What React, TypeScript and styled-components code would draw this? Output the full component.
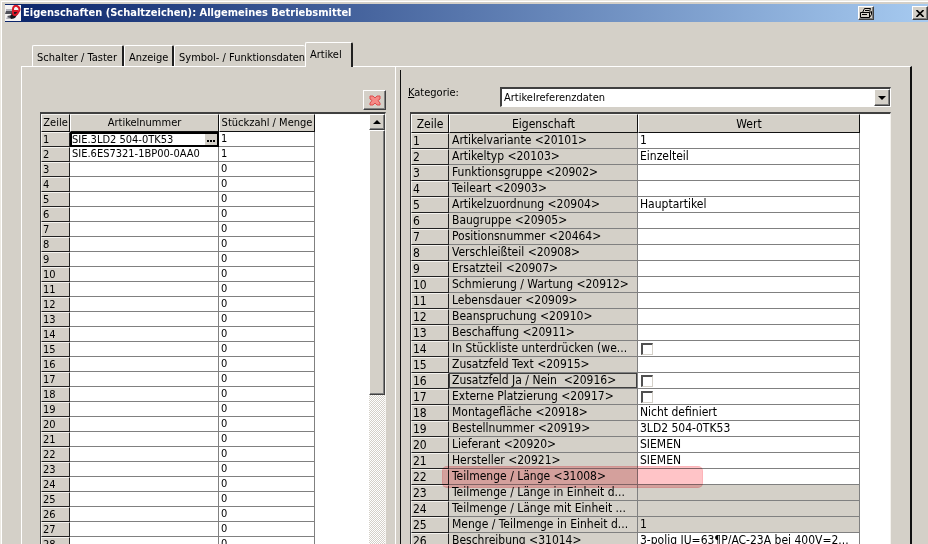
import React from "react";
import styled, { createGlobalStyle, css } from "styled-components";

const face = "#d4d0c8";
const line = "#808080";
const dark = "#404040";

const GlobalStyle = createGlobalStyle`
  *, *::before, *::after { box-sizing: border-box; }
  body { margin: 0; background: ${face}; }
  body, button, input, select {
    font-family: "DejaVu Sans Condensed", "DejaVu Sans", sans-serif;
    font-size: 11px;
    color: #000;
  }
`;

const raised = css`
  background: ${face};
  border: 1px solid;
  border-color: #fff ${dark} ${dark} #fff;
  box-shadow: inset -1px -1px 0 ${line};
`;

const Window = styled.main`
  display: flex;
  flex-direction: column;
  height: 100vh;
  overflow: hidden;
  background: ${face};
  padding: 3px 0 0 4px;
  border-top: 1px solid #ece9e2;
  border-left: 1px solid #ece9e2;
  box-shadow: inset 1px 1px 0 #fff;
`;

const TitleBar = styled.header`
  display: flex;
  align-items: center;
  flex: none;
  height: 18px;
  background: linear-gradient(to right, #0a246a, #a6caf0);
`;

const AppIcon = styled.svg`
  flex: none;
  width: 16px;
  height: 16px;
  margin-right: 2px;
`;

const Title = styled.h1`
  flex: 1;
  margin: 0;
  color: #fff;
  font-size: 11px;
  line-height: 18px;
  font-weight: bold;
  white-space: nowrap;
`;

const CaptionButton = styled.button<{ $gap?: number }>`
  ${raised}
  display: grid;
  place-items: center;
  width: 16px;
  height: 14px;
  padding: 0;
  margin-right: ${(p) => p.$gap ?? 0}px;
`;

const TabList = styled.div`
  display: flex;
  align-items: flex-end;
  flex: none;
  height: 44px;
  padding-left: 27px;
`;

const Tab = styled.button<{ $active?: boolean; $last?: boolean; $width: number }>`
  position: relative;
  width: ${(p) => p.$width}px;
  height: ${(p) => (p.$active ? 25 : 21)}px;
  margin-bottom: ${(p) => (p.$active ? -1 : 0)}px;
  padding: ${(p) => (p.$active ? "0 0 1px 4px" : "2px 0 0 4px")};
  background: ${face};
  border: solid;
  border-width: 1px ${(p) => (p.$last ? 0 : 2)}px 0 1px;
  border-color: #fff #202020 #fff #fff;
  border-radius: 2px 2px 0 0;
  text-align: left;
  white-space: nowrap;
`;

const TabPanel = styled.section`
  display: flex;
  flex: 1;
  min-height: 0;
  margin: 0 16px;
  border: solid;
  border-width: 1px 2px 0 1px;
  border-color: #fff #101010 #fff #fff;
`;

const LeftPane = styled.div`
  display: flex;
  flex-direction: column;
  flex: 0 0 374px;
  padding: 23px 9px 0 18px;
  border-right: 1px solid #fff;
`;

const Splitter = styled.div`
  flex: 0 0 5px;
  margin-top: 3px;
  border-right: 1px solid #101010;
`;

const RightPane = styled.div`
  display: flex;
  flex-direction: column;
  flex: 1;
  min-width: 0;
  padding: 20px 19px 0 7px;
`;

const DeleteButton = styled.button`
  ${raised}
  display: grid;
  place-items: center;
  align-self: flex-end;
  width: 23px;
  height: 20px;
  margin-bottom: 2px;
  padding: 0;
`;

const CategoryRow = styled.div`
  display: flex;
  align-items: flex-start;
  height: 25px;
`;

const CategoryLabel = styled.label`
  width: 92px;
  line-height: 12px;
`;

const ComboBox = styled.div`
  position: relative;
  flex: 1;
  height: 20px;
  border: solid;
  border-width: 2px 1px 1px 2px;
  border-color: ${dark} #fff #fff ${dark};
  background: #fff;
`;

const Select = styled.select`
  appearance: none;
  display: block;
  width: 100%;
  height: 17px;
  padding: 0 18px 0 2px;
  border: 0;
  border-radius: 0;
  background: #fff;
  line-height: 17px;
`;

const ComboArrow = styled.span`
  ${raised}
  position: absolute;
  top: 0;
  right: 0;
  display: grid;
  place-items: center;
  width: 16px;
  height: 17px;
  pointer-events: none;
`;

const GridBox = styled.div<{ $spare?: number; $inset?: number }>`
  display: flex;
  align-items: stretch;
  flex: 1;
  min-height: 0;
  overflow: hidden;
  margin-left: ${(p) => p.$inset ?? 0}px;
  padding-right: ${(p) => p.$spare ?? 0}px;
  background: #fff;
  border: solid;
  border-width: 2px 1px 0 1px;
  border-color: ${dark} #f4f2ee #fff ${dark};
`;

const Table = styled.table<{ $size: number; $width?: string }>`
  flex: none;
  align-self: flex-start;
  width: ${(p) => p.$width ?? "100%"};
  table-layout: fixed;
  border-collapse: separate;
  border-spacing: 0;
  font-size: ${(p) => p.$size}px;
`;

const Col = styled.col<{ $w?: number }>`
  width: ${(p) => (p.$w ? `${p.$w}px` : "auto")};
`;

const HeadCell = styled.th<{ $h: number }>`
  height: ${(p) => p.$h}px;
  padding: 0;
  background: ${face};
  border: 1px solid;
  border-color: #f4f2ee #101010 #101010 #fff;
  font-weight: normal;
  line-height: 14px;
  white-space: nowrap;
`;

const RowHead = styled.th<{ $h: number }>`
  height: ${(p) => p.$h}px;
  padding: 0 0 0 1px;
  background: ${face};
  border: 1px solid;
  border-color: #f4f2ee #202020 #202020 #f4f2ee;
  font-weight: normal;
  text-align: left;
  line-height: ${(p) => p.$h - 2}px;
`;

const Cell = styled.td<{ $h: number; $grey?: boolean; $focus?: boolean; $pad?: number }>`
  position: relative;
  height: ${(p) => p.$h}px;
  padding: 0 0 0 ${(p) => p.$pad ?? 2}px;
  background: ${(p) => (p.$grey ? face : "#fff")};
  border: solid ${line};
  border-width: 0 1px 1px 0;
  line-height: ${(p) => p.$h - 1}px;
  white-space: nowrap;
  ${(p) => p.$focus && css`box-shadow: inset 0 0 0 1px ${dark};`}
`;

const Clip = styled.div`
  overflow: hidden;
  text-overflow: ellipsis;
  padding-right: 2px;
`;

const EditCell = styled.td`
  height: 15px;
  padding: 0;
  border: 1px solid #000;
  box-shadow: inset 0 0 0 1px #000;
`;

const EditRow = styled.div`
  display: flex;
  height: 13px;
  padding: 1px;
`;

const EditInput = styled.input`
  flex: 1;
  min-width: 0;
  height: 11px;
  padding: 0;
  border: 0;
  outline: 0;
  background: #fff;
  line-height: 11px;
`;

const MoreButton = styled.button`
  display: flex;
  align-items: flex-end;
  justify-content: center;
  gap: 1px;
  width: 12px;
  height: 11px;
  padding: 0 0 3px;
  border: 0;
  background: ${face};
`;

const Dot = styled.i`
  width: 2px;
  height: 2px;
  background: #000;
`;

const CheckBox = styled.input`
  appearance: none;
  display: block;
  width: 12px;
  height: 12px;
  margin: 1px 0 0 1px;
  background: #fff;
  border: solid;
  border-width: 2px 1px 1px 2px;
  border-color: #505050 #d4d0c8 #d4d0c8 #505050;
`;

const Marker = styled.span`
  position: absolute;
  z-index: 1;
  top: -3px;
  left: -7px;
  width: 261px;
  height: 22px;
  border-radius: 5px;
  border: 1px solid rgba(240, 90, 100, 0.15);
  background: rgba(255, 70, 80, 0.32);
  mix-blend-mode: multiply;
  pointer-events: none;
`;

const Spacer = styled.div`
  flex: 1;
`;

const ScrollBar = styled.div`
  display: flex;
  flex-direction: column;
  flex: none;
  width: 16px;
  background: repeating-conic-gradient(#fff 0 25%, ${face} 0 50%) 0 0 / 2px 2px;
`;

const ScrollButton = styled.button`
  ${raised}
  display: grid;
  place-items: center;
  height: 16px;
  padding: 0;
`;

const ScrollThumb = styled.div`
  ${raised}
  height: 265px;
`;

const articles = Array.from({ length: 28 }, (_, i) => ({
  number: i === 0 ? "SIE.3LD2 504-0TK53" : i === 1 ? "SIE.6ES7321-1BP00-0AA0" : "",
  count: i < 2 ? "1" : "0",
}));

type Property = { name: string; value?: string; check?: boolean; grey?: boolean; focus?: boolean; marked?: boolean };

const properties: Property[] = [
  { name: "Artikelvariante <20101>", value: "1" },
  { name: "Artikeltyp <20103>", value: "Einzelteil" },
  { name: "Funktionsgruppe <20902>" },
  { name: "Teileart <20903>" },
  { name: "Artikelzuordnung <20904>", value: "Hauptartikel" },
  { name: "Baugruppe <20905>" },
  { name: "Positionsnummer <20464>" },
  { name: "Verschleißteil <20908>" },
  { name: "Ersatzteil <20907>" },
  { name: "Schmierung / Wartung <20912>" },
  { name: "Lebensdauer <20909>" },
  { name: "Beanspruchung <20910>" },
  { name: "Beschaffung <20911>" },
  { name: "In Stückliste unterdrücken (we...", check: true },
  { name: "Zusatzfeld Text <20915>" },
  { name: "Zusatzfeld Ja / Nein\u00a0 <20916>", check: true, focus: true },
  { name: "Externe Platzierung <20917>", check: true },
  { name: "Montagefläche <20918>", value: "Nicht definiert" },
  { name: "Bestellnummer <20919>", value: "3LD2 504-0TK53" },
  { name: "Lieferant <20920>", value: "SIEMEN" },
  { name: "Hersteller <20921>", value: "SIEMEN" },
  { name: "Teilmenge / Länge <31008>", marked: true },
  { name: "Teilmenge / Länge in Einheit d...", grey: true },
  { name: "Teilmenge / Länge mit Einheit ...", grey: true },
  { name: "Menge / Teilmenge in Einheit d...", value: "1", grey: true },
  { name: "Beschreibung <31014>", value: "3-polig IU=63¶P/AC-23A bei 400V=2..." },
];

function ArticleGrid() {
  return (
    <GridBox>
      <Table $size={11} $width="274px">
        <colgroup>
          <Col $w={29} />
          <Col $w={149} />
          <Col $w={96} />
        </colgroup>
        <thead>
          <tr>
            <HeadCell $h={18} scope="col">Zeile</HeadCell>
            <HeadCell $h={18} scope="col">Artikelnummer</HeadCell>
            <HeadCell $h={18} scope="col">Stückzahl / Menge</HeadCell>
          </tr>
        </thead>
        <tbody>
          {articles.map((a, i) => (
            <tr key={i}>
              <RowHead $h={15} scope="row">{i + 1}</RowHead>
              {i === 0 ? (
                <EditCell>
                  <EditRow>
                    <EditInput aria-label="Artikelnummer" defaultValue={a.number} />
                    <MoreButton type="button" aria-label="Auswählen"><Dot /><Dot /><Dot /></MoreButton>
                  </EditRow>
                </EditCell>
              ) : (
                <Cell $h={15}>{a.number}</Cell>
              )}
              <Cell $h={15}>{a.count}</Cell>
            </tr>
          ))}
        </tbody>
      </Table>
      <Spacer />
      <ScrollBar>
        <ScrollButton type="button" aria-label="Nach oben">
          <svg width="8" height="4" viewBox="0 0 8 4"><path d="M0 4 4 0l4 4z" /></svg>
        </ScrollButton>
        <ScrollThumb />
      </ScrollBar>
    </GridBox>
  );
}

function PropertyGrid() {
  return (
    <GridBox $spare={30} $inset={2}>
      <Table $size={12}>
        <colgroup>
          <Col $w={38} />
          <Col $w={189} />
          <Col />
        </colgroup>
        <thead>
          <tr>
            <HeadCell $h={19} scope="col">Zeile</HeadCell>
            <HeadCell $h={19} scope="col">Eigenschaft</HeadCell>
            <HeadCell $h={19} scope="col">Wert</HeadCell>
          </tr>
        </thead>
        <tbody>
          {properties.map((p, i) => (
            <tr key={i}>
              <RowHead $h={16} scope="row">{i + 1}</RowHead>
              <Cell $h={16} $grey $pad={3} $focus={p.focus}>
                {p.name}
                {p.marked && <Marker />}
              </Cell>
              <Cell $h={16} $grey={p.grey}>
                {p.check ? <CheckBox type="checkbox" aria-label={p.name} /> : <Clip>{p.value}</Clip>}
              </Cell>
            </tr>
          ))}
        </tbody>
      </Table>
    </GridBox>
  );
}

export default function App() {
  return (
    <>
      <GlobalStyle />
      <Window>
        <TitleBar>
          <AppIcon viewBox="0 0 16 16" aria-hidden="true">
            <rect width="16" height="16" fill="#f4f2f2" />
            <path d="M1 4h8v2H1zM2 12h7v2H1z" fill="#b4b4bc" />
            <path d="M1 6h7l-1 3H0zM2 11l5-1 1 2-4 1z" fill="#505058" />
            <path d="M6 14 5 12l3-6 4-1 2 2-4 6z" fill="#16161c" />
            <path d="M8 4c0-2 2-4 4-3s3 3 2 5l-2 3c-2 2-4 1-4-1z" fill="none" stroke="#d81828" strokeWidth="2" />
            <path d="m8 6 5 0" stroke="#d81828" strokeWidth="2" />
          </AppIcon>
          <Title>Eigenschaften (Schaltzeichen): Allgemeines Betriebsmittel</Title>
          <CaptionButton type="button" aria-label="Einrollen" $gap={38}>
            <svg width="12" height="10" viewBox="0 0 12 10" fill="none" stroke="#000">
              <path d="M2.500 4.500 4.500.5h6l-1 3M.5 4.500h9l2-1v3l-2 3h-9zM9.500 4.500v5M2 6.500h5M5 2.500h4" />
            </svg>
          </CaptionButton>
          <CaptionButton type="button" aria-label="Schließen">
            <svg width="8" height="7" viewBox="0 0 8 7" stroke="#000" strokeWidth="1.6"><path d="m.5 0 7 7m0-7-7 7" /></svg>
          </CaptionButton>
        </TitleBar>
        <TabList role="tablist">
          <Tab role="tab" $width={92}>Schalter / Taster</Tab>
          <Tab role="tab" $width={50}>Anzeige</Tab>
          <Tab role="tab" $width={131} $last>Symbol- / Funktionsdaten</Tab>
          <Tab role="tab" $width={48} $active aria-selected>Artikel</Tab>
        </TabList>
        <TabPanel role="tabpanel">
          <LeftPane>
            <DeleteButton type="button" aria-label="Löschen">
              <svg width="12" height="11" viewBox="0 0 12 11">
                <path d="M1 1h3l2 2 2-2h3v3L9 5.500 11 8v2H8L6 8l-2 2H1V8l2-2.500L1 4z" fill="#f58a86" stroke="#dc4c4c" />
              </svg>
            </DeleteButton>
            <ArticleGrid />
          </LeftPane>
          <Splitter />
          <RightPane>
            <CategoryRow>
              <CategoryLabel htmlFor="category"><u>K</u>ategorie:</CategoryLabel>
              <ComboBox>
                <Select id="category" defaultValue="ref">
                  <option value="ref">Artikelreferenzdaten</option>
                </Select>
                <ComboArrow>
                  <svg width="8" height="4" viewBox="0 0 8 4"><path d="M0 0h8L4 4z" /></svg>
                </ComboArrow>
              </ComboBox>
            </CategoryRow>
            <PropertyGrid />
          </RightPane>
        </TabPanel>
      </Window>
    </>
  );
}
